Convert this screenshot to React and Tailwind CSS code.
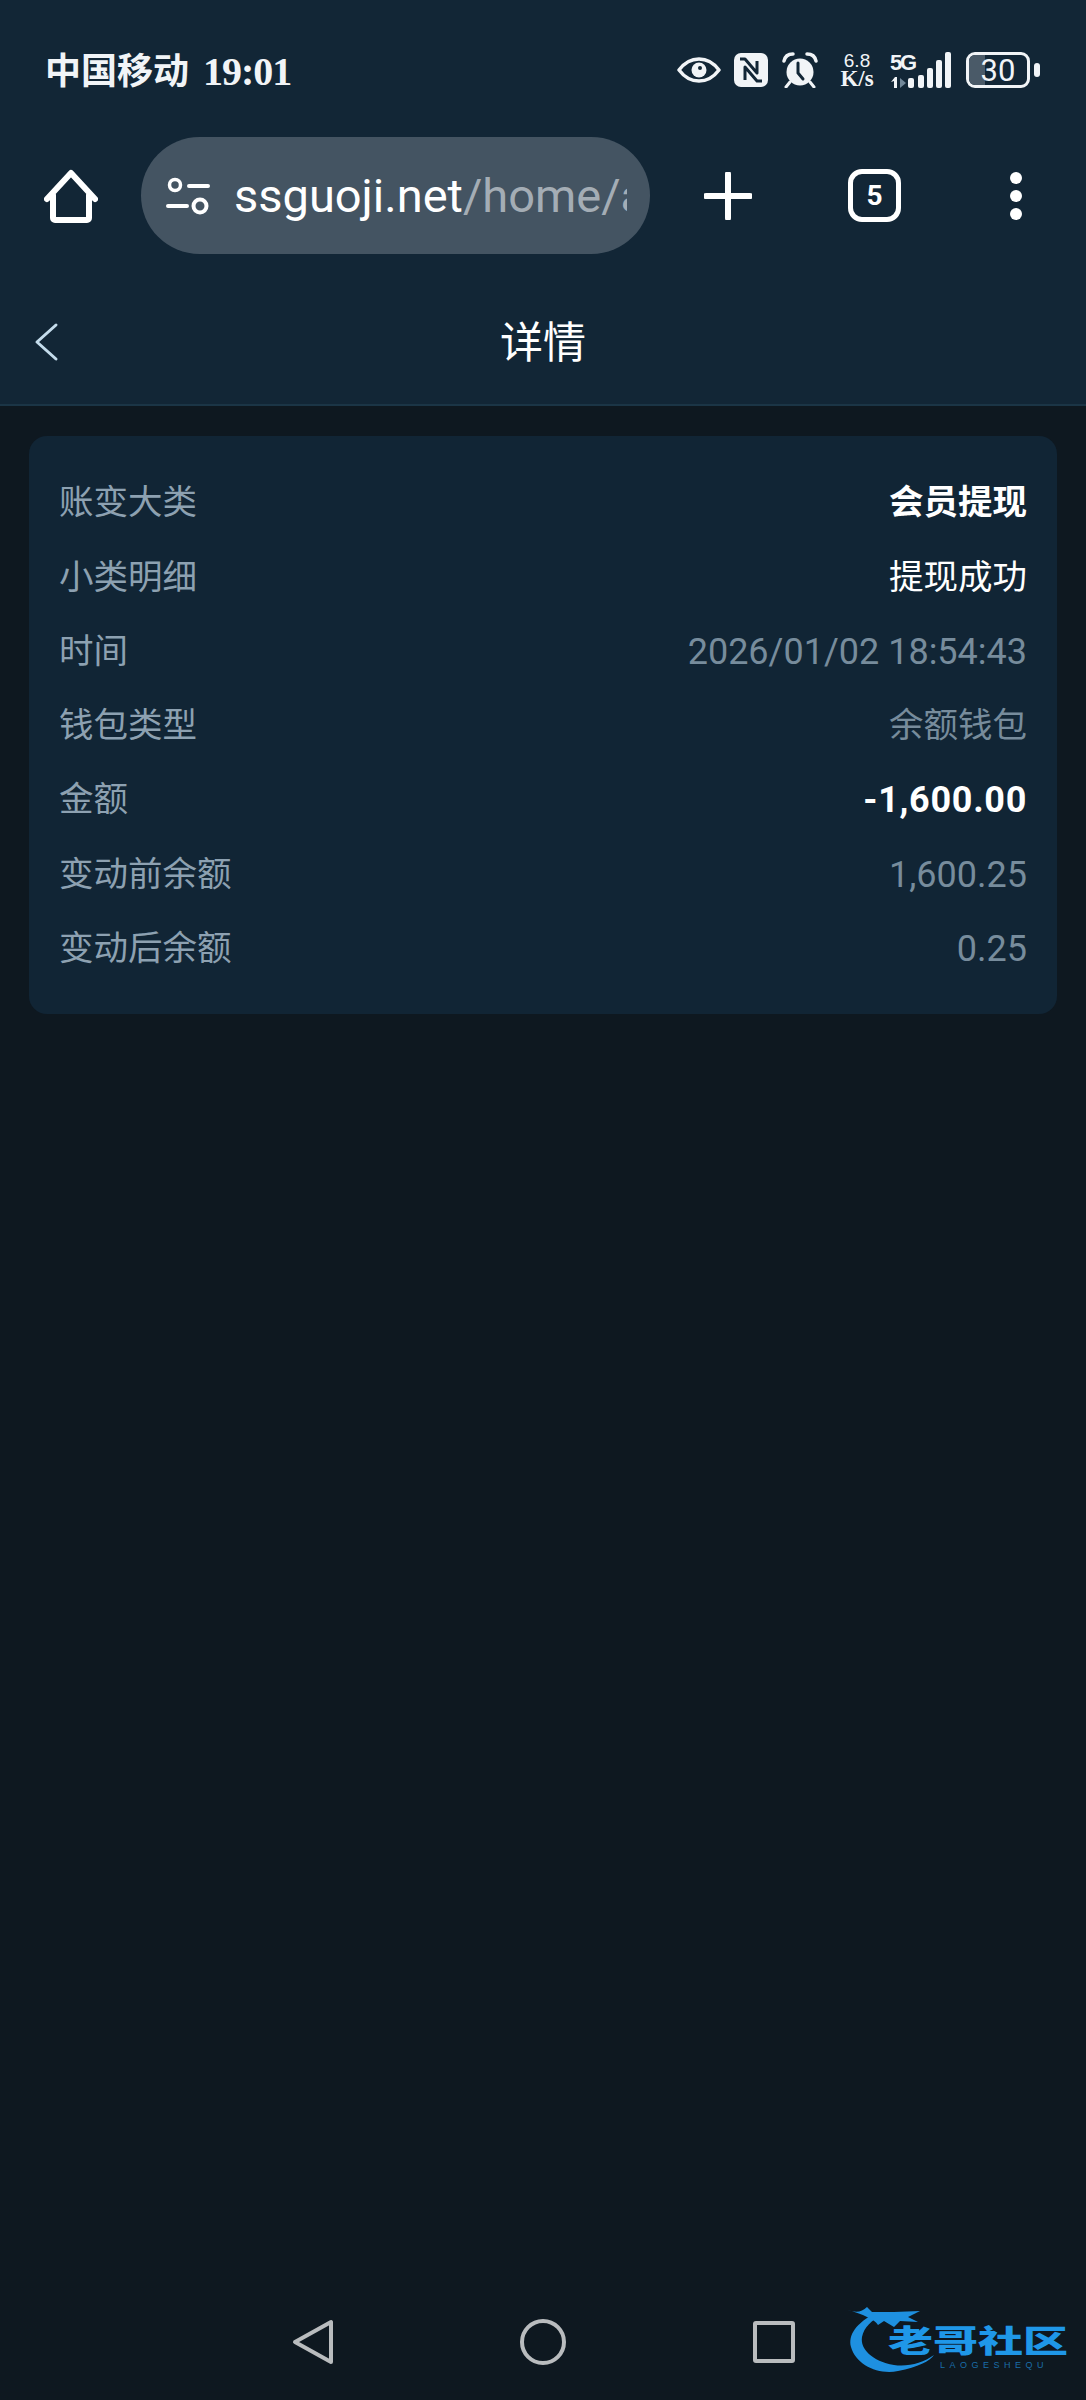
const labelFont = "font-['Roboto','Noto_Sans_CJK_SC',sans-serif]";

const rows = [
  { label: "账变大类", value: "会员提现", cls: "text-[34.5px] font-bold text-white" },
  { label: "小类明细", value: "提现成功", cls: "text-[34.5px] text-white" },
  { label: "时间", value: "2026/01/02 18:54:43", cls: "text-[36px] text-[#778c9c]" },
  { label: "钱包类型", value: "余额钱包", cls: "text-[34.5px] text-[#778c9c]" },
  { label: "金额", value: "-1,600.00", cls: "text-[36px] font-bold tracking-[0.7px] text-white" },
  { label: "变动前余额", value: "1,600.25", cls: "text-[36px] text-[#778c9c]" },
  { label: "变动后余额", value: "0.25", cls: "text-[36px] text-[#778c9c]" },
];

const StatusIcons = () => (
  <div className="flex items-center text-[#f1f4f7]">
    <svg width="44" height="26" viewBox="0 0 44 26" fill="none">
      <path d="M2 13C8 5 14 2 22 2s14 3 20 11c-6 8-12 11-20 11S8 21 2 13Z" stroke="currentColor" strokeWidth="3.5" strokeLinejoin="round" />
      <circle cx="22" cy="13" r="7.5" fill="currentColor" />
      <circle cx="23" cy="11" r="2" fill="#122636" />
    </svg>
    <svg className="ml-[13px]" width="34" height="34" viewBox="0 0 34 34" fill="none">
      <rect width="34" height="34" rx="7" fill="currentColor" />
      <path d="M6 6h5l12 14V8M11 27V14l12 14h5" stroke="#122636" strokeWidth="3" fill="none" strokeLinejoin="round" />
    </svg>
    <svg className="ml-[14px]" width="36" height="36" viewBox="0 0 36 36" fill="none">
      <circle cx="18" cy="20" r="13.5" fill="currentColor" />
      <path d="M2 9c1-5 5-7 9-7M34 9c-1-5-5-7-9-7" stroke="currentColor" strokeWidth="3.5" strokeLinecap="round" />
      <path d="M8 30l-4 5M28 30l4 5" stroke="currentColor" strokeWidth="3" strokeLinecap="round" />
      <path d="M16 11v10l5 6" stroke="#122636" strokeWidth="3" strokeLinecap="round" />
    </svg>
    <div className="ml-[20px] w-[38px] flex flex-col items-center">
      <span className="font-['Liberation_Sans',sans-serif] text-[19px] h-[17px] leading-[17px]">6.8</span>
      <span className="font-['Liberation_Serif',serif] text-[23px] font-bold h-[19px] leading-[19px] whitespace-nowrap">K/s</span>
    </div>
    <svg className="ml-[14px]" width="61" height="38" viewBox="0 0 61 38" fill="none">
      <path d="M1 31l4-5 2 0v11H4v-7z" fill="currentColor" />
      <path d="M10 27l6 5-6 5z" fill="#728899" />
      <rect x="18" y="27" width="6" height="10" rx="2" fill="currentColor" />
      <rect x="28" y="24" width="6" height="13" rx="2" fill="currentColor" />
      <rect x="37" y="17" width="6" height="20" rx="2" fill="currentColor" />
      <rect x="46" y="9" width="6" height="28" rx="2" fill="currentColor" />
      <rect x="55" y="1" width="6" height="36" rx="2" fill="currentColor" />
      <text x="0" y="19" fontFamily="Liberation Sans" fontWeight="700" fontSize="22" textLength="27" fill="currentColor">5G</text>
    </svg>
    <div className="relative ml-[15px] w-[64px] h-[36px] rounded-[9px] border-[3px] border-[#f1f4f7] overflow-hidden flex items-center justify-center">
      <div className="absolute left-0 top-0 bottom-0 w-[16px] bg-[#4a5a68]" />
      <span className="relative font-['Roboto',sans-serif] text-[31px] leading-none">30</span>
    </div>
    <div className="ml-[4px] w-[6px] h-[14px] rounded-full bg-[#f1f4f7]" />
  </div>
);

const BottomLogo = () => (
  <div className="absolute left-[848px] top-[25px] w-[225px] h-[72px]">
    <svg className="absolute left-0 top-0" width="90" height="72" viewBox="0 0 90 72" fill="none">
      <path d="M28 8C8 18 0 30 3 42c5 18 27 28 47 24 20-4 32-10 36-16-11 8-26 12-40 10C24 56 12 44 14 32c2-10 10-17 20-22Z" fill="#1e90e0" />
      <path d="M0 5c8 3 14 2 19-3l5 5h22l26-1-12 6 10 5-18-1-6 6-10-6-6 4C26 14 16 10 0 5Z" fill="#1e90e0" />
    </svg>
    <span className={`absolute left-[40px] top-[13px] whitespace-nowrap ${labelFont} text-[45px] leading-[48px] font-black text-[#1f97e8] scale-y-[0.67]`}>老哥社区</span>
    <span className="absolute left-[92px] top-[55px] whitespace-nowrap font-['Liberation_Sans',sans-serif] text-[9px] leading-[10px] tracking-[4.5px] text-[#1a6da8]">LAOGESHEQU</span>
  </div>
);

export default function App() {
  return (
    <div className={`w-full h-[2400px] flex flex-col bg-[#0e1820] ${labelFont}`}>
      <header className="bg-[#122636] border-b-2 border-[#1b3546]">
        <div className="h-[137px] pt-[3px] pl-[45px] pr-[46px] flex items-center justify-between">
          <div className="flex items-center pt-[4px] text-[#f1f4f7] font-bold">
            <span className="text-[36px]">中国移动</span>
            <span className="ml-[14px] font-['Liberation_Serif',serif] text-[40px] tracking-[-1px]">19:01</span>
          </div>
          <StatusIcons />
        </div>

        <div className="h-[117px] pl-[44px] flex items-center">
          <svg width="54" height="54" viewBox="0 0 54 54" fill="none">
            <path d="M9 26v23a2 2 0 0 0 2 2h32a2 2 0 0 0 2-2V26M3 30 27 4l24 26" stroke="white" strokeWidth="6" strokeLinecap="round" strokeLinejoin="round" />
          </svg>
          <div className="ml-[43px] w-[509px] h-[117px] rounded-full bg-[#445462] flex items-center pl-[25px] pr-[23px]">
            <svg className="shrink-0" width="44" height="38" viewBox="0 0 44 38" fill="none">
              <circle cx="9" cy="8" r="5.5" stroke="white" strokeWidth="3.5" />
              <path d="M23 9h19M2 29h19" stroke="white" strokeWidth="4" strokeLinecap="round" />
              <circle cx="34" cy="29" r="6.5" stroke="white" strokeWidth="4" />
            </svg>
            <div className="ml-[24px] overflow-hidden whitespace-nowrap text-[47px] leading-[60px] text-white">
              ssguoji.net<span className="text-[#a4adb5]">/home/a</span>
            </div>
          </div>
          <svg className="ml-[54px]" width="48" height="48" viewBox="0 0 48 48" fill="none">
            <path d="M24 2v44M2 24h44" stroke="white" strokeWidth="6" strokeLinecap="round" />
          </svg>
          <div className="ml-[96px] w-[53px] h-[53px] rounded-[14px] border-[5px] border-white flex items-center justify-center text-[28px] font-bold text-white leading-none">
            5
          </div>
          <div className="ml-[109px] flex flex-col gap-[6px]">
            <div className="w-[12px] h-[12px] rounded-full bg-white" />
            <div className="w-[12px] h-[12px] rounded-full bg-white" />
            <div className="w-[12px] h-[12px] rounded-full bg-white" />
          </div>
        </div>

        <div className="h-[150px] pt-[28px] relative flex items-center justify-center">
          <svg className="absolute left-[33px] top-[68px]" width="26" height="40" viewBox="0 0 26 40" fill="none">
            <path d="M23 3 4 20l19 17" stroke="#c4dcec" strokeWidth="3" strokeLinecap="round" strokeLinejoin="round" />
          </svg>
          <span className="text-[43px] text-white leading-none">详情</span>
        </div>
      </header>

      <main className="flex-1 px-[29px] pt-[30px]">
        <div className="bg-[#112535] rounded-[18px] pt-[30px] pb-[28px] px-[30px]">
          {rows.map((row) => (
            <div key={row.label} className="h-[74.3px] flex items-center justify-between">
              <span className="text-[34.5px] text-[#8da1b1]">{row.label}</span>
              <span className={row.cls}>{row.value}</span>
            </div>
          ))}
        </div>
      </main>

      <footer className="relative h-[120px] shrink-0">
        <div className="flex items-start pt-[39px] pl-[292px]">
          <svg width="42" height="46" viewBox="0 0 42 46" fill="none">
            <path d="M39 3v40L3 23Z" stroke="#b9bcbe" strokeWidth="4" strokeLinejoin="round" />
          </svg>
          <div className="ml-[186px] w-[46px] h-[46px] rounded-full border-[4px] border-[#b9bcbe]" />
          <div className="ml-[187px] mt-[2px] w-[42px] h-[42px] rounded-[3px] border-[4px] border-[#b9bcbe]" />
        </div>
        <BottomLogo />
      </footer>
    </div>
  );
}
